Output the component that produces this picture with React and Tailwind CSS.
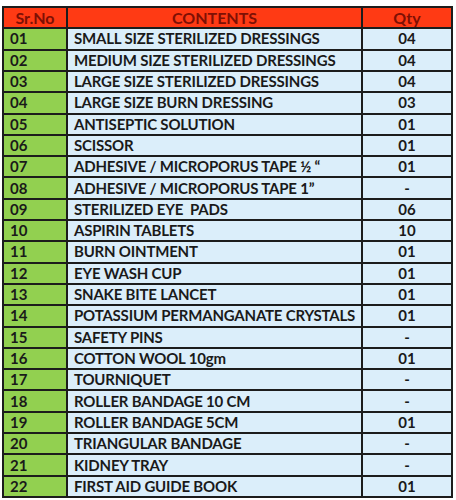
import { Fragment } from "react";

const rows = [
  ["01", "SMALL SIZE STERILIZED DRESSINGS", "04"],
  ["02", "MEDIUM SIZE STERILIZED DRESSINGS", "04"],
  ["03", "LARGE SIZE STERILIZED DRESSINGS", "04"],
  ["04", "LARGE SIZE BURN DRESSING", "03"],
  ["05", "ANTISEPTIC SOLUTION", "01"],
  ["06", "SCISSOR", "01"],
  ["07", "ADHESIVE / MICROPORUS TAPE \u00bd \u201c", "01"],
  ["08", "ADHESIVE / MICROPORUS TAPE 1\u201d", "-"],
  ["09", "STERILIZED EYE  PADS", "06"],
  ["10", "ASPIRIN TABLETS", "10"],
  ["11", "BURN OINTMENT", "01"],
  ["12", "EYE WASH CUP", "01"],
  ["13", "SNAKE BITE LANCET", "01"],
  ["14", "POTASSIUM PERMANGANATE CRYSTALS", "01"],
  ["15", "SAFETY PINS", "-"],
  ["16", "COTTON WOOL 10gm", "01"],
  ["17", "TOURNIQUET", "-"],
  ["18", "ROLLER BANDAGE 10 CM", "-"],
  ["19", "ROLLER BANDAGE 5CM", "01"],
  ["20", "TRIANGULAR BANDAGE", "-"],
  ["21", "KIDNEY TRAY", "-"],
  ["22", "FIRST AID GUIDE BOOK", "01"],
];

export default function App() {
  return (
    <div className="w-[456px] h-[500px] bg-white pt-[6px] pl-[2px]" style={{ fontFamily: "Lato, 'Liberation Sans', sans-serif" }}>
      <div className="w-[451px] h-[492px] bg-[#1c1c1c] p-[2px] grid grid-cols-[62px_293px_1fr] grid-rows-[repeat(23,1fr)] gap-[2px] font-bold text-[15px] text-[#1a1a1a] leading-none">
        <div className="bg-[#ff3a14] text-[#7e1004] text-[16px] flex items-center justify-center">Sr.No</div>
        <div className="bg-[#ff3a14] text-[#7e1004] text-[16px] flex items-center justify-center">CONTENTS</div>
        <div className="bg-[#ff3a14] text-[#7e1004] text-[16px] flex items-center justify-center">Qty</div>
        {rows.map(([n, name, q]) => (
          <Fragment key={n}>
            <div className="bg-[#92d050] flex items-center pl-[6px]">{n}</div>
            <div className="bg-[#dbeefa] flex items-center pl-[6px] whitespace-pre tracking-[-0.2px]">{name}</div>
            <div className="bg-[#dbeefa] flex items-center justify-center">{q}</div>
          </Fragment>
        ))}
      </div>
    </div>
  );
}
